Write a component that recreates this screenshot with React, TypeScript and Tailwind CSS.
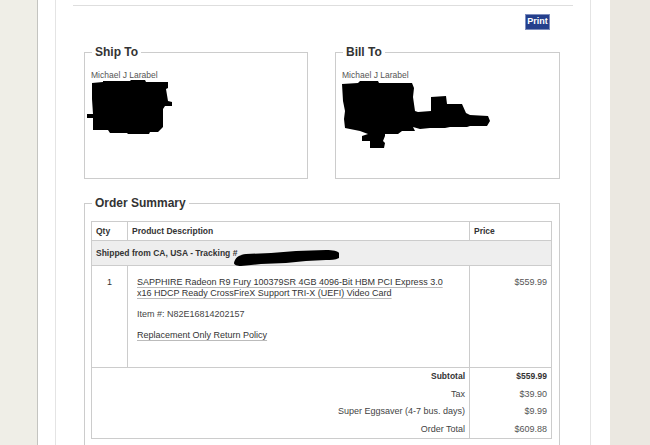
import React from "react";

const font = { fontFamily: '"Liberation Sans", Arial, sans-serif' };

function ShipBlob() {
  return (
    <svg width="90" height="58" viewBox="0 0 90 58" className="block">
      <polygon
        fill="#000"
        points="6,4 17,3 17,2 44,2 45,1 59,1 60,3 82,3 82,9 80,10 82,22 86,23 86,27 79,27 77,30 77,48 72,53 64,53 63,55 42,55 41,54 24,54 22,51 7,51 7,39 1,39 1,35 7,35 6,20"
      />
    </svg>
  );
}

function BillBlob() {
  return (
    <svg width="155" height="72" viewBox="0 0 155 72" className="block">
      <polygon
        fill="#000"
        points="2,5 18,4 20,2 38,2 39,4 72,4 74,9 73,18 75,32 78,33 91,32 91,18 106,17 107,25 122,25 126,34 130,36 148,37 150,42 147,47 130,47 127,48 110,48 105,49 90,49 80,50 73,48 75,52 62,52 58,55 45,55 45,57 43,62 45,64 44,69 30,69 30,62 22,62 22,57 28,55 20,52 10,50 5,49 4,40 5,32 3,22"
      />
    </svg>
  );
}

function TrackBlob() {
  return (
    <svg width="110" height="20" viewBox="0 0 110 20" className="absolute left-[140px] top-[5px]">
      <path
        fill="#000"
        d="M2 17 C3 12 6 9 14 8 L39 7 L64 5 L94 4 C101 4 106 5 107 7 L107 12 C103 14 99 14 94 14 L74 15 L54 17 L29 18 L9 20 C5 20 2 19 2 17 Z"
      />
    </svg>
  );
}

export default function App() {
  return (
    <div className="flex h-[445px] w-[650px] overflow-hidden bg-[#efeee7]" style={font}>
      <div className="w-[37px] shrink-0" />
      <div className="flex w-[573px] shrink-0 border-l border-[#c4c4c0] bg-white pl-[17px] pr-[19px]">
        <div className="flex w-[536px] flex-col border-x border-[#e4e4e4]">
          <div className="mx-[17px] h-[6px] shrink-0 border-b border-[#dedede]" />
          <div className="flex justify-end pr-[40px] pt-[8px]">
            <div className="flex h-[16px] w-[25px] items-center justify-center border border-[#7d8dbd] bg-[#243f8c] text-[9px] font-bold text-white">
              Print
            </div>
          </div>
          <div className="flex gap-[27px] pl-[28px] pr-[29px] pt-[15px]">
            <fieldset className="h-[134px] w-[224px] border border-[#cccccc] px-[6px]">
              <legend className="ml-[1px] px-[3px] text-[12px] font-bold leading-[15px] text-[#333]">Ship To</legend>
              <div className="mt-[10px] text-[8.5px] leading-[10px] text-[#555]">Michael J Larabel</div>
              <div className="-ml-[5px] -mt-[1px]">
                <ShipBlob />
              </div>
            </fieldset>
            <fieldset className="h-[134px] w-[225px] border border-[#cccccc] px-[6px]">
              <legend className="ml-[1px] px-[3px] text-[12px] font-bold leading-[15px] text-[#333]">Bill To</legend>
              <div className="mt-[10px] text-[8.5px] leading-[10px] text-[#555]">Michael J Larabel</div>
              <div className="-ml-[2px] -mt-[1px]">
                <BillBlob />
              </div>
            </fieldset>
          </div>
          <div className="pl-[28px] pr-[30px] pt-[17px]">
            <fieldset className="h-[260px] border border-[#cccccc] px-[6px] pt-[10px]">
              <legend className="ml-[1px] px-[3px] text-[12px] font-bold leading-[15px] text-[#333]">Order Summary</legend>
              <table className="w-[460px] table-fixed border-collapse text-[#333]">
                <colgroup>
                  <col className="w-[36px]" />
                  <col className="w-[342px]" />
                  <col className="w-[82px]" />
                </colgroup>
                <tbody>
                  <tr className="h-[19px] text-[8.5px] font-bold">
                    <td className="border border-[#cccccc] px-[4px]">Qty</td>
                    <td className="border border-[#cccccc] px-[4px]">Product Description</td>
                    <td className="border border-[#cccccc] px-[4px]">Price</td>
                  </tr>
                  <tr className="h-[25px] bg-[#eeeeee] text-[8.5px] font-bold">
                    <td colSpan={3} className="relative border border-[#cccccc] px-[4px]">
                      Shipped from CA, USA - Tracking #
                      <TrackBlob />
                    </td>
                  </tr>
                  <tr className="h-[102px] align-top text-[9px]">
                    <td className="border border-[#cccccc] pt-[11px] text-center leading-[11px]">1</td>
                    <td className="border border-[#cccccc] pl-[9px] pt-[11px] leading-[11px]">
                      <div className="w-[312px] text-[#333]">
                        <span className="underline decoration-[#bbb] underline-offset-[2px]">
                          SAPPHIRE Radeon R9 Fury 100379SR 4GB 4096-Bit HBM PCI Express 3.0 x16 HDCP Ready CrossFireX Support TRI-X (UEFI) Video Card
                        </span>
                      </div>
                      <div className="mt-[10px] text-[#444]">Item #: N82E16814202157</div>
                      <div className="mt-[10px]">
                        <span className="underline decoration-[#bbb] underline-offset-[2px]">Replacement Only Return Policy</span>
                      </div>
                    </td>
                    <td className="border border-[#cccccc] pr-[4px] pt-[11px] text-right leading-[11px] text-[#555]">$559.99</td>
                  </tr>
                  <tr className="h-[71px] text-[9px]">
                    <td colSpan={2} className="border border-[#cccccc] pr-[4px] text-right text-[#444]">
                      <div className="flex flex-col">
                        <div className="flex h-[17.5px] items-center justify-end text-[8.5px] font-bold text-[#333]">Subtotal</div>
                        <div className="flex h-[17.5px] items-center justify-end">Tax</div>
                        <div className="flex h-[17.5px] items-center justify-end">Super Eggsaver (4-7 bus. days)</div>
                        <div className="flex h-[17.5px] items-center justify-end">Order Total</div>
                      </div>
                    </td>
                    <td className="border border-[#cccccc] pr-[4px] text-right text-[#555]">
                      <div className="flex flex-col">
                        <div className="flex h-[17.5px] items-center justify-end text-[8.5px] font-bold text-[#333]">$559.99</div>
                        <div className="flex h-[17.5px] items-center justify-end">$39.90</div>
                        <div className="flex h-[17.5px] items-center justify-end">$9.99</div>
                        <div className="flex h-[17.5px] items-center justify-end">$609.88</div>
                      </div>
                    </td>
                  </tr>
                </tbody>
              </table>
            </fieldset>
          </div>
        </div>
      </div>
      <div className="flex-1 bg-[#ebe8e1]" />
    </div>
  );
}
